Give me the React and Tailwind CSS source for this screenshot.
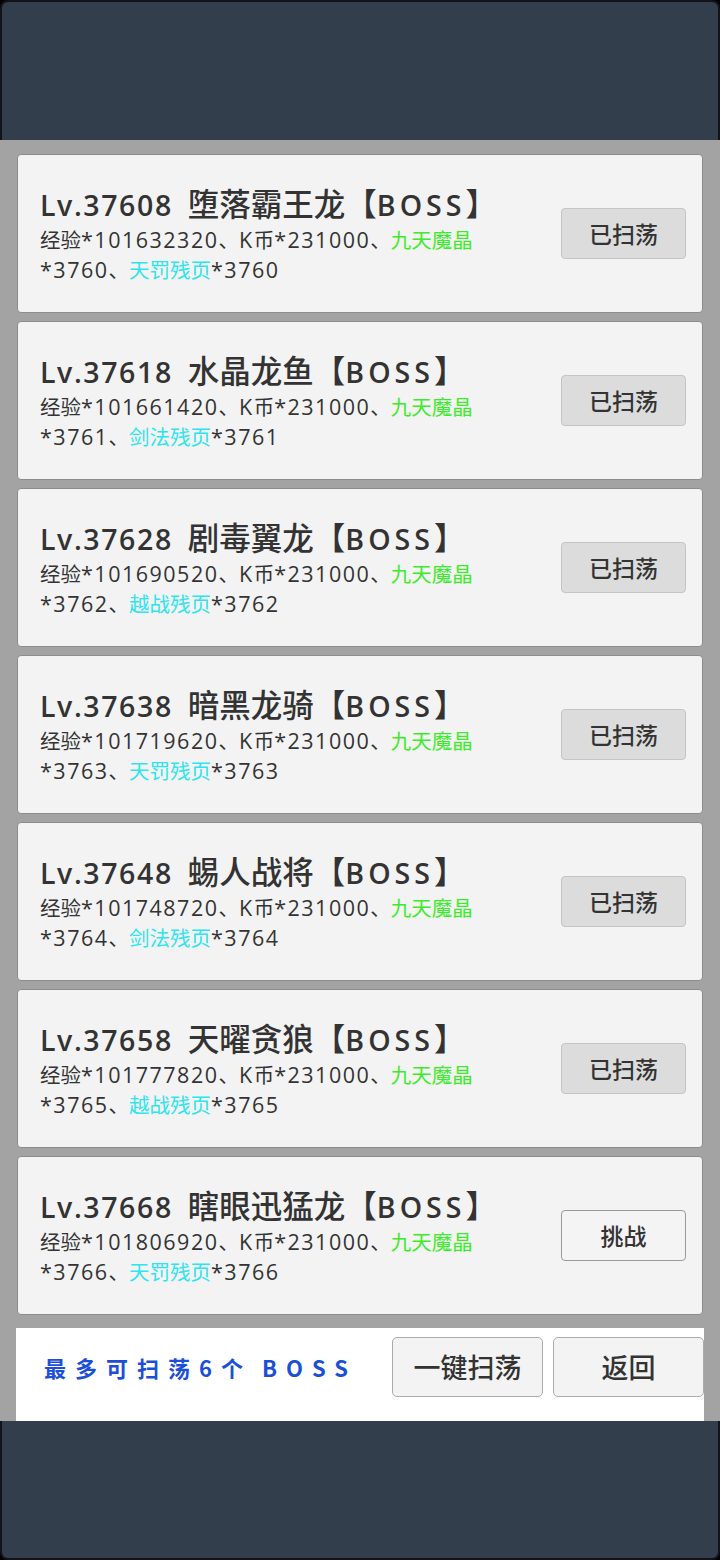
import React from "react";

const bosses = [
  { lv: "37608", name: "堕落霸王龙", exp: "101632320", n: "3760", item: "天罚残页", done: true },
  { lv: "37618", name: "水晶龙鱼", exp: "101661420", n: "3761", item: "剑法残页", done: true },
  { lv: "37628", name: "剧毒翼龙", exp: "101690520", n: "3762", item: "越战残页", done: true },
  { lv: "37638", name: "暗黑龙骑", exp: "101719620", n: "3763", item: "天罚残页", done: true },
  { lv: "37648", name: "蜴人战将", exp: "101748720", n: "3764", item: "剑法残页", done: true },
  { lv: "37658", name: "天曜贪狼", exp: "101777820", n: "3765", item: "越战残页", done: true },
  { lv: "37668", name: "瞎眼迅猛龙", exp: "101806920", n: "3766", item: "天罚残页", done: false },
];

const cjkFont = { fontFamily: '"Noto Sans CJK SC", "Noto Sans", sans-serif' };
const latinFont = { fontFamily: '"Open Sans", "Noto Sans CJK SC", sans-serif' };

function Mixed({ text, latin, cjk }) {
  const parts = text.split(/([\u3000-\u303f\u4e00-\u9fff\uff00-\uffef]+)/).filter((p) => p.length > 0);
  return (
    <>
      {parts.map((p, i) =>
        /[\u3000-\u303f\u4e00-\u9fff\uff00-\uffef]/.test(p) ? (
          <span key={i} className={cjk} style={cjkFont}>
            {p}
          </span>
        ) : (
          <span key={i} className={latin} style={latinFont}>
            {p}
          </span>
        )
      )}
    </>
  );
}

const SL = "text-[21.5px] tracking-[1.5px]";
const SC = "text-[20.5px]";

function Card({ b }) {
  return (
    <div className="h-[159px] flex items-center justify-between rounded-[4px] border border-[#8c8c8c] bg-[#f3f3f3] pl-[22px] pr-[16px]">
      <div className="flex flex-col text-[#333333]">
        <div className="h-[36px] leading-[36px] whitespace-nowrap">
          <span className="text-[28.5px] tracking-[1.6px] font-semibold" style={latinFont}>
            Lv.{b.lv}
          </span>
          <span className="ml-[15px] text-[31.5px] font-medium" style={cjkFont}>
            {b.name}【
          </span>
          <span className="text-[28.5px] tracking-[4px] font-semibold" style={latinFont}>
            BOSS
          </span>
          <span className="text-[31.5px] font-medium" style={cjkFont}>
            】
          </span>
        </div>
        <div className="mt-[4px] h-[30px] leading-[30px] whitespace-nowrap">
          <Mixed text={`经验*${b.exp}、K币*231000、`} latin={SL} cjk={SC} />
          <span className={`${SC} text-[#3cec2a]`} style={cjkFont}>
            九天魔晶
          </span>
        </div>
        <div className="h-[30px] leading-[30px] whitespace-nowrap">
          <Mixed text={`*${b.n}、`} latin={SL} cjk={SC} />
          <span className={`${SC} text-[#2ee4ef]`} style={cjkFont}>
            {b.item}
          </span>
          <Mixed text={`*${b.n}`} latin={SL} cjk={SC} />
        </div>
      </div>
      {b.done ? (
        <div className="w-[125px] h-[51px] flex items-center justify-center rounded-[4px] border border-[#c4c4c4] bg-[#dcdcdc] text-[23px] font-medium text-[#333333]">
          已扫荡
        </div>
      ) : (
        <div className="w-[125px] h-[51px] flex items-center justify-center rounded-[4px] border border-[#9a9a9a] bg-[#f4f4f4] text-[23px] font-medium text-[#333333]">
          挑战
        </div>
      )}
    </div>
  );
}

export default function App() {
  return (
    <div className="w-[720px] h-[1560px] flex flex-col bg-black" style={cjkFont}>
      <div className="h-[140px] bg-[#333e4c] border-2 border-b-0 border-[#111318] rounded-t-[8px]" />
      <div className="bg-[#a3a3a3] pt-[14px] flex flex-col">
        <div className="px-[17px] flex flex-col gap-[8px]">
          {bosses.map((b) => (
            <Card key={b.lv} b={b} />
          ))}
        </div>
        <div className="mt-[13px] ml-[16px] w-[688px] h-[93px] bg-white flex items-start pt-[9px]">
          <div className="flex-1 h-[60px] flex items-center pl-[28px] text-[22px] font-bold text-[#1c4fd6] tracking-[9px] whitespace-nowrap">
            <span>最多可扫荡6个</span>
            <span className="ml-[10px]">BOSS</span>
          </div>
          <div className="w-[151px] h-[60px] flex items-center justify-center rounded-[5px] border border-[#ababab] bg-[#f3f3f3] text-[27px] font-medium text-[#333333]">
            一键扫荡
          </div>
          <div className="ml-[10px] w-[151px] h-[60px] flex items-center justify-center rounded-[5px] border border-[#ababab] bg-[#f3f3f3] text-[27px] font-medium text-[#333333]">
            返回
          </div>
        </div>
      </div>
      <div className="flex-1 bg-[#333e4c] border-2 border-t-0 border-[#111318] rounded-b-[8px]" />
    </div>
  );
}
